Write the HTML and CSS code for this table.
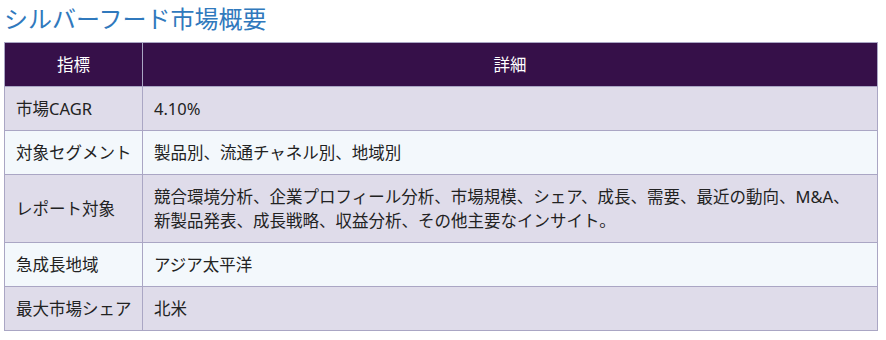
FILE: index.html
```html
<!DOCTYPE html>
<html lang="ja">
<head>
<meta charset="utf-8">
<link rel="stylesheet" href="styles.css">
</head>
<body>
<div class="wrap">
  <h2 class="title">シルバーフード市場概要</h2>
  <table class="summary">
    <thead>
      <tr><th class="c1">指標</th><th>詳細</th></tr>
    </thead>
    <tbody>
      <tr class="odd"><td>市場CAGR</td><td>4.10%</td></tr>
      <tr class="even"><td>対象セグメント</td><td>製品別、流通チャネル別、地域別</td></tr>
      <tr class="odd"><td>レポート対象</td><td>競合環境分析、企業プロフィール分析、市場規模、シェア、成長、需要、最近の動向、M&amp;A、新製品発表、成長戦略、収益分析、その他主要なインサイト。</td></tr>
      <tr class="even"><td>急成長地域</td><td>アジア太平洋</td></tr>
      <tr class="odd"><td>最大市場シェア</td><td>北米</td></tr>
    </tbody>
  </table>
</div>
</body>
</html>
```
FILE: styles.css
```css
html, body {
  margin: 0;
  padding: 0;
  background: #ffffff;
}
.wrap {
  padding: 4px 8px 0 4px;
  font-family: "Noto Sans", "Noto Sans CJK JP", sans-serif;
}
.title {
  margin: 0;
  font-size: 24px;
  font-weight: normal;
  line-height: 30px;
  color: #3079bd;
  height: 38px;
}
.summary {
  width: 874px;
  border-collapse: collapse;
  font-size: 16.5px;
  line-height: 24px;
  color: #222;
  table-layout: fixed;
}
.summary th, .summary td {
  border: 1px solid #aaa6c4;
  padding: 10px 16px 9px 11px;
  text-align: left;
  vertical-align: middle;
}
.summary th {
  background: #361049;
  color: #ffffff;
  font-weight: normal;
  text-align: center;
  padding-right: 11px;
}
.summary .c1 {
  width: 115px;
}
.summary td:first-child {
  padding-right: 10px;
}
.odd td {
  background: #dfdcea;
}
.even td {
  background: #f3f8fc;
}
```
